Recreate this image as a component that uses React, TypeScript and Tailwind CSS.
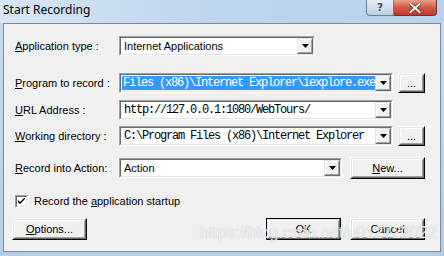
import React from "react";

const ui = "font-['Liberation_Sans',Arial,sans-serif] text-[11px] leading-[13px] text-black";
const mono = "font-['Liberation_Mono','Courier_New',monospace] text-[12px] leading-[14px] tracking-[-1.2px]";

function Key({ k, rest }: { k: string; rest: string }) {
  return (
    <span>
      <span className="underline underline-offset-[1px]">{k}</span>
      {rest}
    </span>
  );
}

function DropArrow() {
  return (
    <div className="flex h-full w-[16px] shrink-0 items-center justify-center border border-t-[#e3e3e3] border-l-[#e3e3e3] border-r-[#696969] border-b-[#696969] bg-[#f0f0f0]">
      <div className="flex h-full w-full items-center justify-center border border-t-white border-l-white border-r-[#a0a0a0] border-b-[#a0a0a0]">
        <svg width="7" height="4" viewBox="0 0 7 4">
          <path d="M0 0h7L3.5 4z" fill="#000" />
        </svg>
      </div>
    </div>
  );
}

function Combo({ width, children }: { width: string; children: React.ReactNode }) {
  return (
    <div className={`h-[20px] shrink-0 border border-t-[#a0a0a0] border-l-[#a0a0a0] border-r-white border-b-white ${width}`}>
      <div className="flex h-full border border-t-[#696969] border-l-[#696969] border-r-[#e3e3e3] border-b-[#e3e3e3] bg-white">
        <div className="flex min-w-0 flex-1 items-center overflow-hidden whitespace-nowrap pl-[1px]">{children}</div>
        <DropArrow />
      </div>
    </div>
  );
}

function Btn({
  width,
  height = "h-[22px]",
  isDefault,
  children,
}: {
  width: string;
  height?: string;
  isDefault?: boolean;
  children: React.ReactNode;
}) {
  const frame = isDefault ? "border-[#000]" : "border-t-white border-l-white border-r-[#000] border-b-[#000]";
  return (
    <div className={`shrink-0 border ${frame} ${width} ${height}`}>
      <div className="h-full border border-t-[#e3e3e3] border-l-[#e3e3e3] border-r-[#696969] border-b-[#696969]">
        <div className="flex h-full items-center justify-center border border-t-white border-l-white border-r-[#a0a0a0] border-b-[#a0a0a0] bg-[#f0f0f0]">
          {children}
        </div>
      </div>
    </div>
  );
}

function Row({ mt, children }: { mt: string; children: React.ReactNode }) {
  return <div className={`flex h-[22px] items-center pl-[11px] ${mt}`}>{children}</div>;
}

export default function App() {
  return (
    <div className={`relative h-[256px] w-[444px] overflow-hidden bg-gradient-to-b from-[#c6dbf0] to-[#b4cde8] ${ui}`}>
      {/* Title bar */}
      <div className="relative flex h-[23px] items-start bg-gradient-to-r from-[#d7e6f5] via-[#bcd4ec] to-[#b9d1ea] pl-[3px] pt-[2px]">
        <span className="font-['Noto_Sans','Open_Sans',sans-serif] text-[12px] leading-[16px] text-black">Start Recording</span>
        <div className="absolute right-[7px] top-0 flex h-[16px]">
          <div className="flex w-[28px] items-center justify-center rounded-bl-[4px] border border-t-0 border-[#6d7f94] bg-gradient-to-b from-[#e6eef7] to-[#bccde0]">
            <span className="font-['DejaVu_Sans',sans-serif] text-[11px] font-bold leading-[12px] text-[#3a4a5c] [text-shadow:0_0_2px_#fff]">?</span>
          </div>
          <div className="flex w-[43px] items-center justify-center rounded-br-[4px] border border-l-0 border-t-0 border-[#6e3030] bg-gradient-to-b from-[#e8a08f] via-[#cf5a43] to-[#c0392b]">
            <svg width="12" height="10" viewBox="0 0 12 10">
              <path d="M1.5 1l9 8M10.5 1l-9 8" stroke="#5a1f18" strokeWidth="3.4" strokeLinecap="square" />
              <path d="M1.5 1l9 8M10.5 1l-9 8" stroke="#fff" strokeWidth="2" strokeLinecap="square" />
            </svg>
          </div>
        </div>
      </div>

      {/* Client area */}
      <div className="mx-[3px] flex h-[229px] flex-col border border-[#7b8a9b] bg-[#f0f0f0]">
        <Row mt="mt-[11px]">
          <div className="w-[104px] shrink-0">
            <Key k="A" rest="pplication type :" />
          </div>
          <Combo width="w-[196px]">
            <span className="pl-[2px]">Internet Applications</span>
          </Combo>
        </Row>

        <Row mt="mt-[15px]">
          <div className="w-[104px] shrink-0">
            <Key k="P" rest="rogram to record :" />
          </div>
          <Combo width="w-[274px]">
            <span className={`${mono} bg-[#3399ff] pl-[1px] text-white`}>Files (x86)\Internet Explorer\iexplore.exe</span>
          </Combo>
          <div className="ml-[5px]">
            <Btn width="w-[27px]" height="h-[20px]">
              <span className="leading-[10px]">...</span>
            </Btn>
          </div>
        </Row>

        <Row mt="mt-[5px]">
          <div className="w-[104px] shrink-0">
            <Key k="U" rest="RL Address :" />
          </div>
          <Combo width="w-[274px]">
            <span className={`${mono} pl-[2px]`}>http://127.0.0.1:1080/WebTours/</span>
          </Combo>
        </Row>

        <Row mt="mt-[4px]">
          <div className="w-[104px] shrink-0">
            <Key k="W" rest="orking directory :" />
          </div>
          <Combo width="w-[274px]">
            <span className={`${mono} pl-[2px]`}>C:\Program Files (x86)\Internet Explorer</span>
          </Combo>
          <div className="ml-[5px]">
            <Btn width="w-[27px]" height="h-[20px]">
              <span className="leading-[10px]">...</span>
            </Btn>
          </div>
        </Row>

        <Row mt="mt-[10px]">
          <div className="w-[104px] shrink-0">
            <Key k="R" rest="ecord into Action:" />
          </div>
          <Combo width="w-[223px]">
            <span className="pl-[2px]">Action</span>
          </Combo>
          <div className="ml-[8px]">
            <Btn width="w-[75px]">
              <Key k="N" rest="ew..." />
            </Btn>
          </div>
        </Row>

        {/* Checkbox */}
        <div className="mt-[15px] flex h-[14px] items-center pl-[11px]">
          <div className="h-[13px] w-[13px] border border-t-[#a0a0a0] border-l-[#a0a0a0] border-r-white border-b-white">
            <div className="flex h-full w-full items-center justify-center border border-t-[#696969] border-l-[#696969] border-r-[#e3e3e3] border-b-[#e3e3e3] bg-white">
              <svg width="7" height="7" viewBox="0 0 7 7">
                <path d="M0 2v2l2 2 5-5V-1L2 4z" fill="#000" />
              </svg>
            </div>
          </div>
          <span className="ml-[6px]">
            Record the <Key k="a" rest="pplication startup" />
          </span>
        </div>

        {/* Bottom buttons */}
        <div className="mt-[10px] flex h-[22px] items-center pl-[8px]">
          <Btn width="w-[75px]">
            <Key k="O" rest="ptions..." />
          </Btn>
          <div className="ml-[179px]">
            <Btn width="w-[75px]" isDefault>
              <span>OK</span>
            </Btn>
          </div>
          <div className="ml-[9px]">
            <Btn width="w-[75px]">
              <span>Cancel</span>
            </Btn>
          </div>
        </div>
      </div>

      {/* Watermark */}
      <div className="pointer-events-none absolute left-[200px] top-[224px] font-['Liberation_Sans',Arial,sans-serif] text-[16px] leading-[18px] text-white/80 [text-shadow:0_0_1px_rgba(120,120,120,0.6)]">
        https://blog.csdn.net/u012722022
      </div>
    </div>
  );
}
